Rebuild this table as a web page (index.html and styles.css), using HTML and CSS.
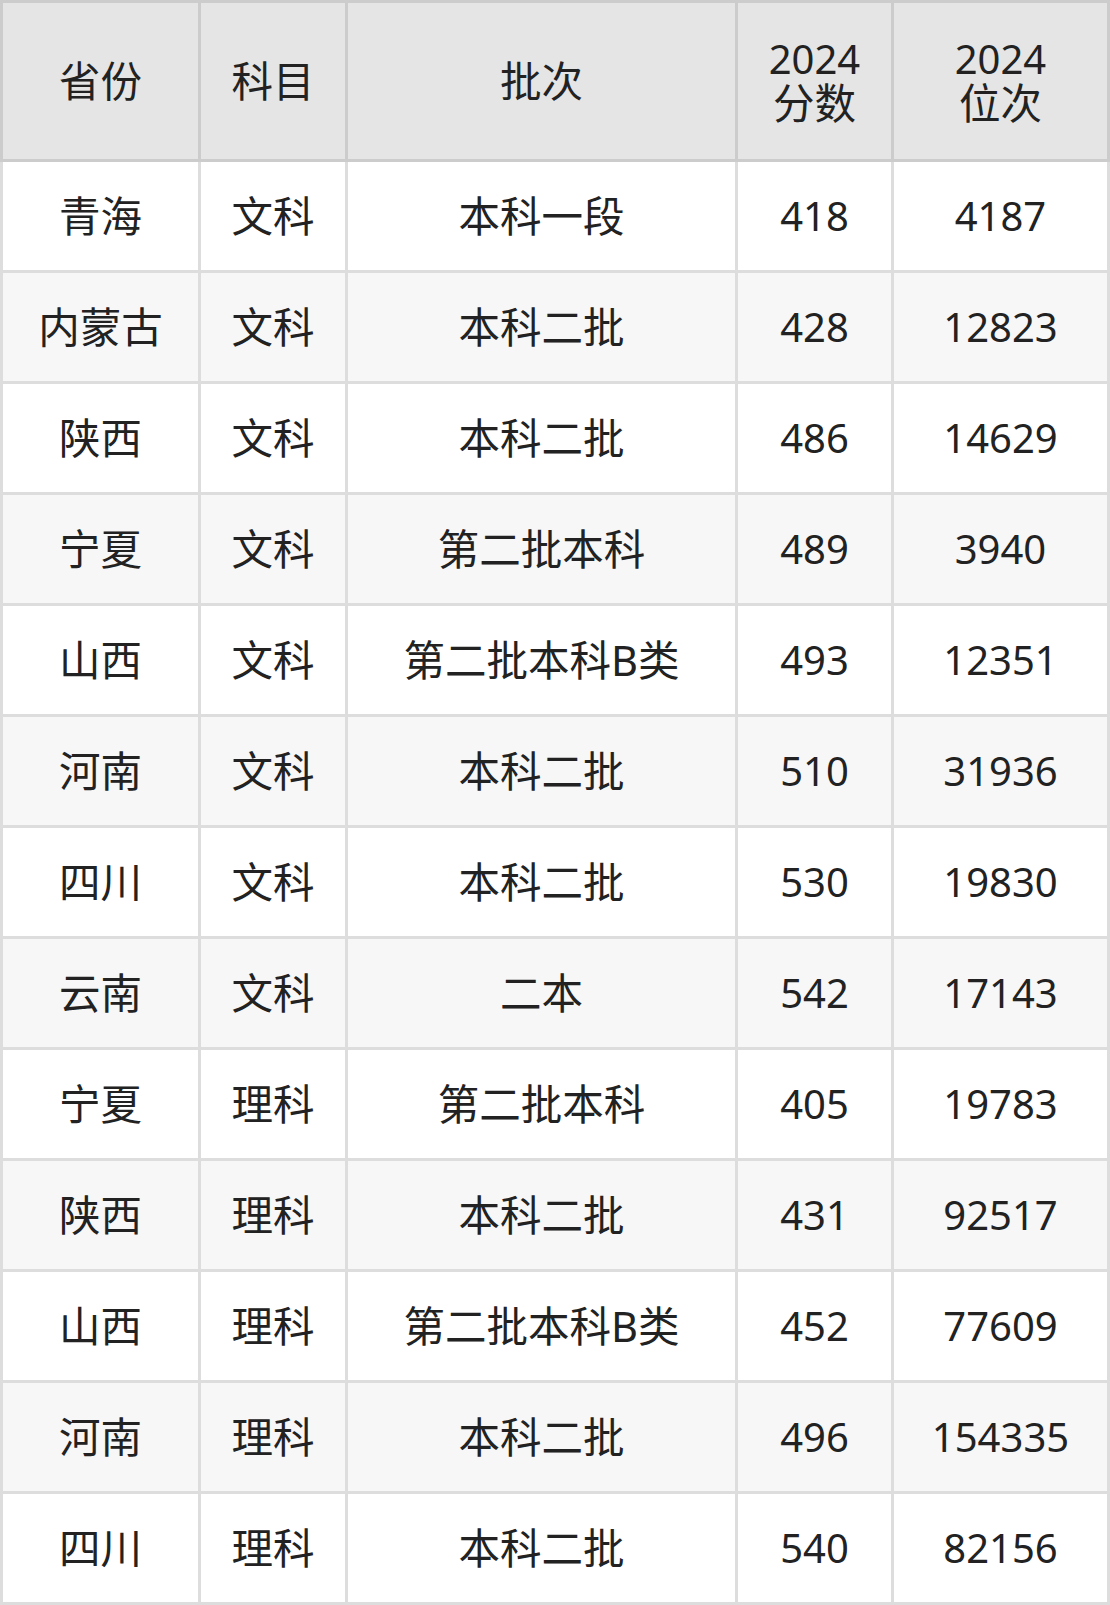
FILE: index.html
```html
<!DOCTYPE html>
<html lang="zh">
<head>
<meta charset="utf-8">
<link rel="stylesheet" href="styles.css">
</head>
<body>
<table class="score-table">
  <colgroup>
    <col class="c1"><col class="c2"><col class="c3"><col class="c4"><col class="c5">
  </colgroup>
  <thead>
    <tr><th>省份</th><th>科目</th><th>批次</th><th><span class="num">2024</span><br>分数</th><th><span class="num">2024</span><br>位次</th></tr>
  </thead>
  <tbody>
    <tr><td>青海</td><td>文科</td><td>本科一段</td><td>418</td><td>4187</td></tr>
    <tr><td>内蒙古</td><td>文科</td><td>本科二批</td><td>428</td><td>12823</td></tr>
    <tr><td>陕西</td><td>文科</td><td>本科二批</td><td>486</td><td>14629</td></tr>
    <tr><td>宁夏</td><td>文科</td><td>第二批本科</td><td>489</td><td>3940</td></tr>
    <tr><td>山西</td><td>文科</td><td>第二批本科B类</td><td>493</td><td>12351</td></tr>
    <tr><td>河南</td><td>文科</td><td>本科二批</td><td>510</td><td>31936</td></tr>
    <tr><td>四川</td><td>文科</td><td>本科二批</td><td>530</td><td>19830</td></tr>
    <tr><td>云南</td><td>文科</td><td>二本</td><td>542</td><td>17143</td></tr>
    <tr><td>宁夏</td><td>理科</td><td>第二批本科</td><td>405</td><td>19783</td></tr>
    <tr><td>陕西</td><td>理科</td><td>本科二批</td><td>431</td><td>92517</td></tr>
    <tr><td>山西</td><td>理科</td><td>第二批本科B类</td><td>452</td><td>77609</td></tr>
    <tr><td>河南</td><td>理科</td><td>本科二批</td><td>496</td><td>154335</td></tr>
    <tr><td>四川</td><td>理科</td><td>本科二批</td><td>540</td><td>82156</td></tr>
  </tbody>
</table>
</body>
</html>
```
FILE: styles.css
```css
html, body {
  margin: 0;
  padding: 0;
  background: #ffffff;
}
.score-table {
  width: 1110px;
  border-collapse: collapse;
  table-layout: fixed;
  font-family: "Noto Sans", "Noto Sans CJK SC", sans-serif;
  font-size: 41.5px;
  color: #222222;
}
.c1 { width: 198px; }
.c2 { width: 147px; }
.c3 { width: 390px; }
.c4 { width: 156px; }
.c5 { width: 216px; }
.score-table th,
.score-table td {
  text-align: center;
  vertical-align: middle;
  padding: 0;
  font-weight: normal;
}
.score-table th {
  height: 156px;
  background: #e5e5e5;
  border: 3px solid #cccccc;
  line-height: 45px;
}
.score-table td {
  height: 108px;
  border: 3px solid #dddddd;
  line-height: 54px;
}
.score-table .num,
.score-table td:nth-child(n+4) {
  font-size: 40px;
}
.score-table tbody tr:nth-child(even) td {
  background: #f7f7f7;
}
```
